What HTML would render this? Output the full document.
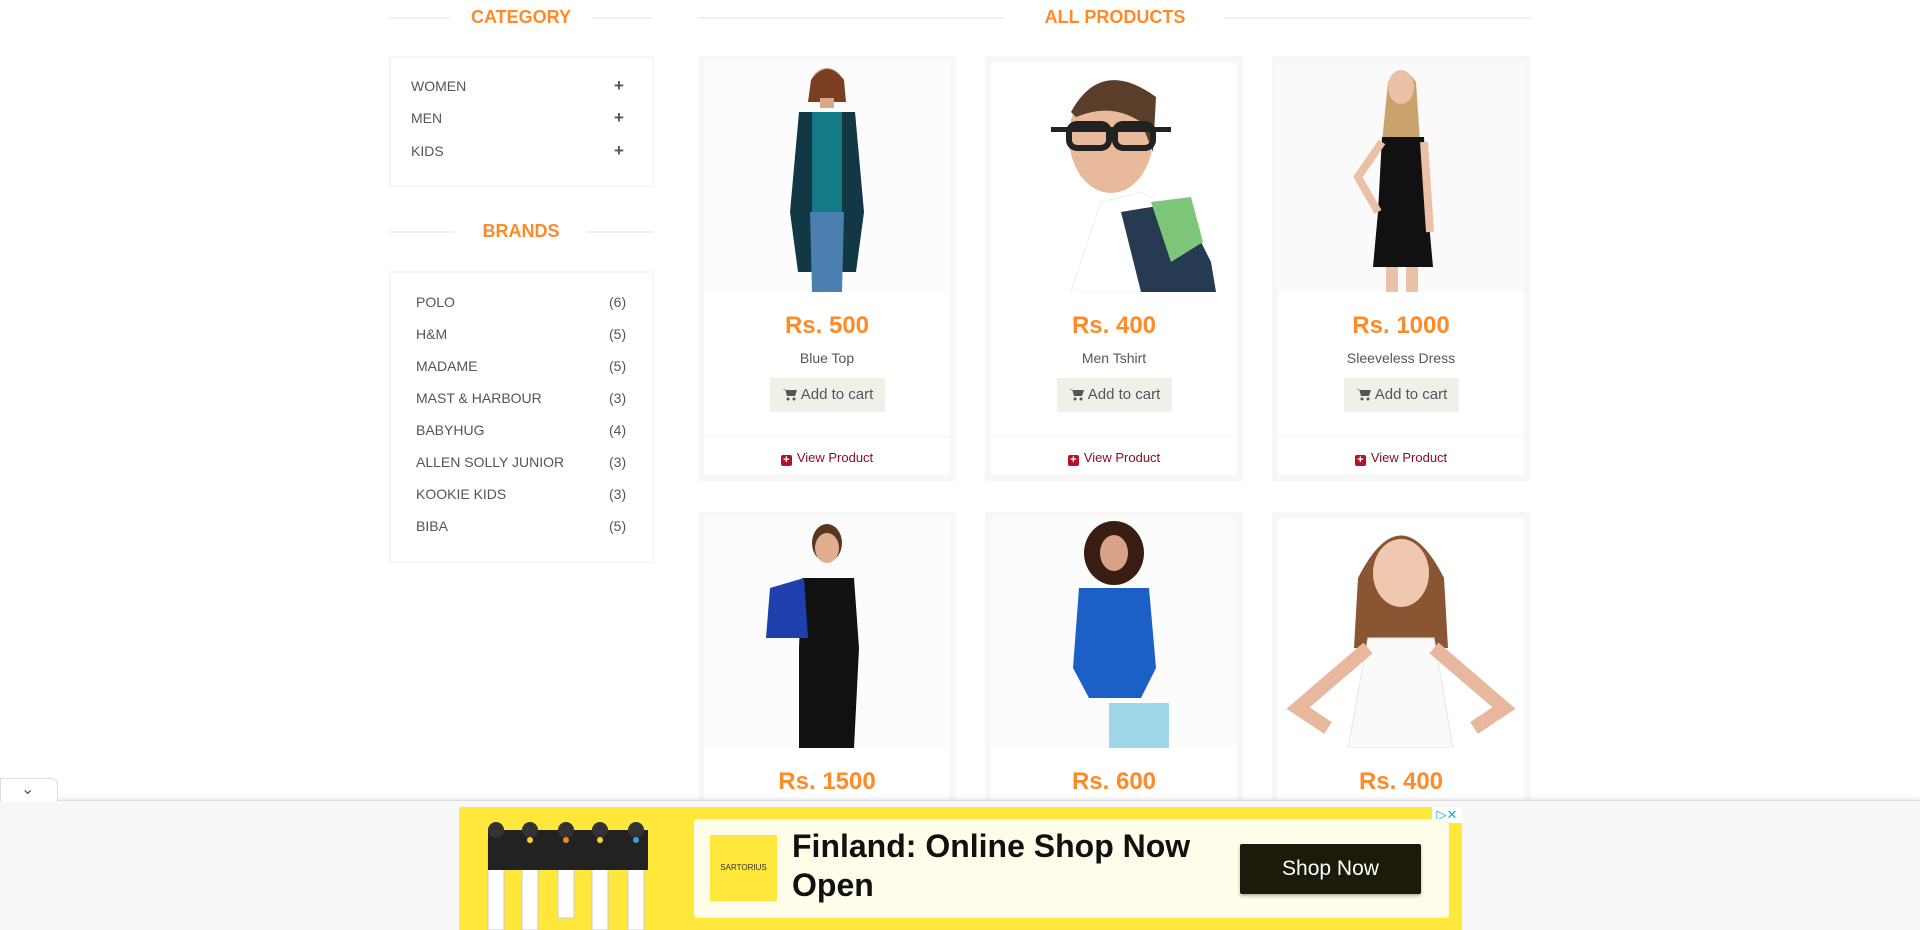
<!DOCTYPE html>
<html><head><meta charset="utf-8"><style>
*{box-sizing:border-box;margin:0;padding:0}
html,body{width:1920px;height:930px;overflow:hidden}
body{background:#fff;font-family:"Liberation Sans",Arial,sans-serif;position:relative}
.abs{position:absolute}
.hd{position:absolute;color:#FE8A28;font-weight:bold;font-size:18px;text-align:center;background:#fff;padding:0 14px}
.line{position:absolute;height:2px;background:#f0f0ee}
.box{position:absolute;border:2px solid #f7f7f0;background:#fff}
.cat{position:absolute;font-size:14px;color:#555;left:411px}
.plus{position:absolute;left:614px;font-size:17px;font-weight:bold;color:#555}
.br{position:absolute;font-size:14px;color:#555;left:416px}
.cnt{position:absolute;font-size:14px;color:#555;left:609px}
.card{position:absolute;width:258px;height:425px;border:6px solid #f7f7f5;background:#fff;text-align:center}
.card svg.im{position:absolute;left:0;top:0}
.price{position:absolute;top:250px;left:0;right:0;color:#FE8A28;font-size:24px;font-weight:bold}
.name{position:absolute;top:288px;left:0;right:0;color:#555;font-size:14px}
.btn{position:absolute;top:316px;left:66px;width:115px;height:34px;background:#F0F0E9;color:#555;font-size:15px;line-height:34px}
.btn svg{vertical-align:-2px;margin-right:4px}
.sep{position:absolute;top:374px;left:0;right:0;height:1px;background:#f3f3f0}
.vp{position:absolute;top:388px;left:0;right:0;color:#8b0b1c;font-size:13px}
.vp b{display:inline-block;width:11px;height:11px;background:#b0132a;border-radius:2px;color:#fff;font-size:11px;line-height:11px;vertical-align:-1px;margin-right:5px}
</style></head><body>

<div class="line" style="left:389px;top:17px;width:264px"></div>
<div class="hd" style="left:450px;top:7px;width:142px">CATEGORY</div>
<div class="line" style="left:698px;top:17px;width:306px"></div>
<div class="line" style="left:1224px;top:17px;width:307px"></div>
<div class="hd" style="left:1030px;top:7px;width:170px;background:none">ALL PRODUCTS</div>

<div class="box" style="left:389px;top:56px;width:265px;height:131px"></div>
<div class="cat" style="top:78px">WOMEN</div><div class="plus" style="top:76px">+</div>
<div class="cat" style="top:110px">MEN</div><div class="plus" style="top:108px">+</div>
<div class="cat" style="top:143px">KIDS</div><div class="plus" style="top:141px">+</div>

<div class="line" style="left:389px;top:231px;width:264px"></div>
<div class="hd" style="left:455px;top:221px;width:132px">BRANDS</div>

<div class="box" style="left:389px;top:271px;width:265px;height:292px"></div>
<div class="br" style="top:294px">POLO</div><div class="cnt" style="top:294px">(6)</div>
<div class="br" style="top:326px">H&amp;M</div><div class="cnt" style="top:326px">(5)</div>
<div class="br" style="top:358px">MADAME</div><div class="cnt" style="top:358px">(5)</div>
<div class="br" style="top:390px">MAST &amp; HARBOUR</div><div class="cnt" style="top:390px">(3)</div>
<div class="br" style="top:422px">BABYHUG</div><div class="cnt" style="top:422px">(4)</div>
<div class="br" style="top:454px">ALLEN SOLLY JUNIOR</div><div class="cnt" style="top:454px">(3)</div>
<div class="br" style="top:486px">KOOKIE KIDS</div><div class="cnt" style="top:486px">(3)</div>
<div class="br" style="top:518px">BIBA</div><div class="cnt" style="top:518px">(5)</div>

<!-- row 1 -->
<div class="card" style="left:698px;top:56px">
<svg class="im" width="246" height="230"><rect width="246" height="230" fill="#fcfcfc"/><circle cx="123" cy="22" r="16" fill="#d9a98a"/><path d="M107 18 Q123 -4 140 18 L142 40 L104 40Z" fill="#7a3f22"/><rect x="116" y="36" width="14" height="10" fill="#d9a98a"/><path d="M95 50 L151 50 L160 150 L152 210 L94 210 L86 150Z" fill="#123845"/><rect x="108" y="50" width="30" height="100" fill="#137a86"/><path d="M106 150 L140 150 L138 230 L108 230Z" fill="#4a7fb0"/></svg>
<div class="price">Rs. 500</div><div class="name">Blue Top</div>
<div class="btn"><svg width="15" height="13" viewBox="0 0 15 13"><path d="M0 1h3l2 7h8l2-6H4" fill="#555"/><circle cx="6" cy="11" r="1.5" fill="#555"/><circle cx="12" cy="11" r="1.5" fill="#555"/></svg>Add to cart</div><div class="sep"></div><div class="vp"><b>+</b>View Product</div></div>

<div class="card" style="left:985px;top:56px">
<svg class="im" width="246" height="230"><rect width="246" height="230" fill="#fff"/><path d="M150 130 L200 160 L225 230 L80 230 L110 140Z" fill="#fff" stroke="#eee"/><path d="M130 150 L190 140 L220 200 L225 230 L150 230Z" fill="#263a52"/><path d="M160 140 L200 135 L212 180 L180 200Z" fill="#7ec77a"/><ellipse cx="120" cy="75" rx="42" ry="56" fill="#e8b99a"/><path d="M80 50 Q110 -5 165 35 L162 90 L150 60 Q120 40 85 55Z" fill="#5a3e2a"/><rect x="78" y="62" width="40" height="24" rx="8" fill="none" stroke="#222" stroke-width="6"/><rect x="124" y="62" width="38" height="24" rx="8" fill="none" stroke="#222" stroke-width="6"/><rect x="60" y="65" width="120" height="5" fill="#222"/></svg>
<div class="price">Rs. 400</div><div class="name">Men Tshirt</div>
<div class="btn"><svg width="15" height="13" viewBox="0 0 15 13"><path d="M0 1h3l2 7h8l2-6H4" fill="#555"/><circle cx="6" cy="11" r="1.5" fill="#555"/><circle cx="12" cy="11" r="1.5" fill="#555"/></svg>Add to cart</div><div class="sep"></div><div class="vp"><b>+</b>View Product</div></div>

<div class="card" style="left:1272px;top:56px">
<svg class="im" width="246" height="230"><rect width="246" height="230" fill="#fafafa"/><path d="M110 20 Q123 -2 138 20 L142 80 L104 80Z" fill="#c9a36b"/><ellipse cx="123" cy="25" rx="13" ry="17" fill="#eac0a6"/><path d="M104 75 L146 75 L150 150 L155 205 L95 205 L100 150Z" fill="#111"/><path d="M104 80 L80 115 L100 150" fill="none" stroke="#eac0a6" stroke-width="8"/><path d="M146 80 L152 170" fill="none" stroke="#eac0a6" stroke-width="8"/><rect x="108" y="205" width="12" height="25" fill="#eac0a6"/><rect x="128" y="205" width="12" height="25" fill="#eac0a6"/></svg>
<div class="price">Rs. 1000</div><div class="name">Sleeveless Dress</div>
<div class="btn"><svg width="15" height="13" viewBox="0 0 15 13"><path d="M0 1h3l2 7h8l2-6H4" fill="#555"/><circle cx="6" cy="11" r="1.5" fill="#555"/><circle cx="12" cy="11" r="1.5" fill="#555"/></svg>Add to cart</div><div class="sep"></div><div class="vp"><b>+</b>View Product</div></div>

<!-- row 2 -->
<div class="card" style="left:698px;top:512px;height:418px">
<svg class="im" width="246" height="230"><rect width="246" height="230" fill="#fcfcfc"/><ellipse cx="123" cy="25" rx="15" ry="19" fill="#5a3520"/><ellipse cx="123" cy="30" rx="12" ry="15" fill="#e0ae90"/><path d="M98 60 L150 60 L155 130 L150 230 L95 230 L95 130Z" fill="#111"/><path d="M66 70 L100 60 L104 120 L62 120Z" fill="#1f3fae"/></svg>
<div class="price">Rs. 1500</div></div>

<div class="card" style="left:985px;top:512px;height:418px">
<svg class="im" width="246" height="230"><rect width="246" height="230" fill="#fcfcfc"/><ellipse cx="123" cy="35" rx="30" ry="32" fill="#3a1d12"/><ellipse cx="123" cy="35" rx="14" ry="18" fill="#d9a188"/><path d="M88 70 L158 70 L165 150 L150 180 L98 180 L82 150Z" fill="#1b5fc7"/><rect x="118" y="185" width="60" height="45" fill="#9ed6ea"/></svg>
<div class="price">Rs. 600</div></div>

<div class="card" style="left:1272px;top:512px;height:418px">
<svg class="im" width="246" height="230"><rect width="246" height="230" fill="#fff"/><path d="M80 60 Q123 -25 166 60 L170 130 L76 130Z" fill="#8a5533"/><ellipse cx="123" cy="55" rx="28" ry="34" fill="#f0c8b0"/><path d="M90 120 L156 120 L175 230 L70 230Z" fill="#fafafa" stroke="#e6e6e6"/><path d="M90 130 L20 190 L50 210" fill="none" stroke="#e8b89e" stroke-width="14"/><path d="M156 130 L226 190 L196 210" fill="none" stroke="#e8b89e" stroke-width="14"/></svg>
<div class="price">Rs. 400</div></div>

<!-- ad bar -->
<div class="abs" style="left:0;top:800px;width:1920px;height:130px;background:#f7f7f7;border-top:1px solid #ddd;box-shadow:0 -2px 3px rgba(0,0,0,0.08)"></div>
<div class="abs" style="left:0;top:778px;width:58px;height:24px;background:#fff;border:1px solid #ddd;border-bottom:none;border-radius:0 6px 0 0;font-size:16px;color:#555;padding-left:20px;line-height:22px">&#8964;</div>
<div class="abs" style="left:459px;top:807px;width:1003px;height:123px;background:#FFE83B"></div>
<svg class="abs" style="left:478px;top:818px" width="200" height="112"><g fill="#fff" stroke="#ccc"><rect x="10" y="20" width="16" height="92"/><rect x="44" y="20" width="16" height="92"/><rect x="80" y="20" width="16" height="80"/><rect x="114" y="20" width="16" height="92"/><rect x="150" y="20" width="16" height="92"/></g><rect x="10" y="12" width="160" height="40" fill="#222"/><g fill="#333"><circle cx="18" cy="12" r="8"/><circle cx="52" cy="12" r="8"/><circle cx="88" cy="12" r="8"/><circle cx="122" cy="12" r="8"/><circle cx="158" cy="12" r="8"/></g><g fill="#ffd32a"><circle cx="52" cy="22" r="3"/><circle cx="122" cy="22" r="3"/></g><circle cx="88" cy="22" r="3" fill="#f08a20"/><circle cx="158" cy="22" r="3" fill="#3aa0e0"/></svg>
<div class="abs" style="left:1432px;top:807px;width:30px;height:16px;background:#fff;color:#1aa3d4;font-size:13px;text-align:center;line-height:16px">&#9655;&#10005;</div>
<div class="abs" style="left:694px;top:819px;width:755px;height:99px;background:#FFFDEA;border-radius:4px"></div>
<div class="abs" style="left:710px;top:835px;width:67px;height:66px;background:#FFE83B;font-size:8px;text-align:center;line-height:66px;color:#333">SARTORIUS</div>
<div class="abs" style="left:792px;top:827px;width:420px;font-size:32px;font-weight:bold;color:#111;line-height:39px">Finland: Online Shop Now Open</div>
<div class="abs" style="left:1240px;top:844px;width:181px;height:50px;background:#1c1a0a;color:#fff;font-size:21px;text-align:center;line-height:50px;border-radius:2px;box-shadow:0 2px 3px rgba(0,0,0,0.3)">Shop Now</div>
</body></html>
